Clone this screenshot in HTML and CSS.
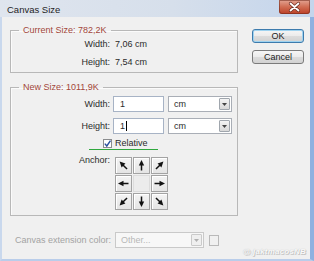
FILE: index.html
```html
<!DOCTYPE html>
<html>
<head>
<meta charset="utf-8">
<link rel="stylesheet" href="styles.css">
</head>
<body>
<div class="window">
  <div class="titlebar">
    <span class="title">Canvas Size</span>
    <div class="close">
      <svg width="31" height="14" viewBox="0 0 31 14"><path d="M11.5 3.5l8 7M19.5 3.5l-8 7" stroke="#6b2a1e" stroke-width="3.2" stroke-linecap="round"/><path d="M11.5 3.5l8 7M19.5 3.5l-8 7" stroke="#fff" stroke-width="1.8" stroke-linecap="round"/></svg>
    </div>
  </div>
  <div class="client">
    <div class="main">
      <div class="groups">
        <fieldset class="group g1">
          <legend>Current Size: 782,2K</legend>
          <div class="row"><span class="lbl">Width:</span><span class="val">7,06 cm</span></div>
          <div class="row"><span class="lbl">Height:</span><span class="val">7,54 cm</span></div>
        </fieldset>
        <fieldset class="group g2">
          <legend>New Size: 1011,9K</legend>
          <div class="row">
            <span class="lbl">Width:</span>
            <div class="input">1</div>
            <div class="select"><span class="sel-text">cm</span><span class="drop"><svg width="5" height="3" viewBox="0 0 5 3"><path d="M0 0h5L2.5 3z" fill="#444"/></svg></span></div>
          </div>
          <div class="row">
            <span class="lbl">Height:</span>
            <div class="input">1<span class="caret"></span></div>
            <div class="select"><span class="sel-text">cm</span><span class="drop"><svg width="5" height="3" viewBox="0 0 5 3"><path d="M0 0h5L2.5 3z" fill="#444"/></svg></span></div>
          </div>
          <div class="mark">
            <span class="check"><svg width="9" height="9" viewBox="0 0 9 9"><path d="M1.8 4.6l2 2.4L7.5 1.6" fill="none" stroke="#2a4f9e" stroke-width="1.4"/></svg></span>
            <span class="check-label">Relative</span>
          </div>
          <div class="anchor-row">
            <span class="lbl anchor-lbl">Anchor:</span>
            <div class="anchor">
              <div class="cell"><svg viewBox="0 0 15 15"><g transform="rotate(-45 7.5 7.5)"><path d="M7.5 12.5V6" stroke="#111" stroke-width="1.5"/><path d="M7.5 2L4.8 7.5h5.4z" fill="#111"/></g></svg></div>
              <div class="cell"><svg viewBox="0 0 15 15"><g><path d="M7.5 12.5V6" stroke="#111" stroke-width="1.5"/><path d="M7.5 2L4.8 7.5h5.4z" fill="#111"/></g></svg></div>
              <div class="cell"><svg viewBox="0 0 15 15"><g transform="rotate(45 7.5 7.5)"><path d="M7.5 12.5V6" stroke="#111" stroke-width="1.5"/><path d="M7.5 2L4.8 7.5h5.4z" fill="#111"/></g></svg></div>
              <div class="cell"><svg viewBox="0 0 15 15"><g transform="rotate(-90 7.5 7.5)"><path d="M7.5 12.5V6" stroke="#111" stroke-width="1.5"/><path d="M7.5 2L4.8 7.5h5.4z" fill="#111"/></g></svg></div>
              <div class="cell center"></div>
              <div class="cell"><svg viewBox="0 0 15 15"><g transform="rotate(90 7.5 7.5)"><path d="M7.5 12.5V6" stroke="#111" stroke-width="1.5"/><path d="M7.5 2L4.8 7.5h5.4z" fill="#111"/></g></svg></div>
              <div class="cell"><svg viewBox="0 0 15 15"><g transform="rotate(-135 7.5 7.5)"><path d="M7.5 12.5V6" stroke="#111" stroke-width="1.5"/><path d="M7.5 2L4.8 7.5h5.4z" fill="#111"/></g></svg></div>
              <div class="cell"><svg viewBox="0 0 15 15"><g transform="rotate(180 7.5 7.5)"><path d="M7.5 12.5V6" stroke="#111" stroke-width="1.5"/><path d="M7.5 2L4.8 7.5h5.4z" fill="#111"/></g></svg></div>
              <div class="cell"><svg viewBox="0 0 15 15"><g transform="rotate(135 7.5 7.5)"><path d="M7.5 12.5V6" stroke="#111" stroke-width="1.5"/><path d="M7.5 2L4.8 7.5h5.4z" fill="#111"/></g></svg></div>
            </div>
          </div>
        </fieldset>
      </div>
      <div class="buttons">
        <div class="btn ok">OK</div>
        <div class="btn">Cancel</div>
      </div>
    </div>
    <div class="ext">
      <span class="ext-lbl">Canvas extension color:</span>
      <div class="select disabled"><span class="sel-text">Other...</span><span class="drop"><svg width="5" height="3" viewBox="0 0 5 3"><path d="M0 0h5L2.5 3z" fill="#b0b0b0"/></svg></span></div>
      <span class="swatch"></span>
    </div>
    <div class="watermark">@ jaktmacosNB</div>
  </div>
</div>
</body>
</html>
```
FILE: styles.css
```css
html, body {
  margin: 0;
  padding: 0;
}
body {
  width: 314px;
  height: 261px;
  overflow: hidden;
  font-family: "Liberation Sans", Arial, sans-serif;
  font-size: 9px;
  color: #2b2b2b;
  background: #f0f0f0;
}
.window {
  display: flex;
  flex-direction: column;
  width: 314px;
  height: 261px;
}
.titlebar {
  height: 17px;
  flex: none;
  display: flex;
  align-items: flex-start;
  background: linear-gradient(to right, #dfe5ee 0%, #d6dfeb 55%, #c4d5ec 100%);
}
.title {
  padding-left: 7px;
  line-height: 20px;
  font-size: 9.5px;
  color: #1e1e1e;
}
.close {
  margin-left: auto;
  margin-right: 4px;
  width: 31px;
  height: 14px;
  border-radius: 0 0 3px 3px;
  background: linear-gradient(to bottom, #e3a493 0%, #d06c52 50%, #bb3f26 100%);
  box-shadow: inset 0 0 0 1px rgba(110, 40, 25, 0.55);
}
.close svg {
  display: block;
}
.client {
  flex: 1;
  display: flex;
  flex-direction: column;
  position: relative;
  border-left: 2px solid #c9d8ed;
  border-right: 4px solid #8fb1e0;
  border-bottom: 2px solid #b9cdea;
  padding: 7px 6px 0 8px;
  background: #f0f0f0;
}
.main {
  display: flex;
  gap: 14px;
}
.groups {
  display: flex;
  flex-direction: column;
  width: 228px;
}
.group {
  margin: 0;
  min-width: 0;
  width: 228px;
  box-sizing: border-box;
  border: 1px solid #b8b8b8;
  box-shadow: inset 1px 1px 0 #fbfbfb;
}
.group legend {
  margin-left: 8px;
  padding: 0 4px;
  line-height: 12px;
  color: #a2463a;
}
.g1 {
  padding: 1px 4px 3px 0;
}
.g2 {
  margin-top: 8px;
  padding: 3px 4px 5px 0;
}
.row {
  display: flex;
  align-items: center;
  height: 14px;
}
.g1 .row + .row {
  margin-top: 4px;
}
.g2 .row {
  height: 16px;
}
.g2 .row + .row {
  margin-top: 6px;
}
.lbl {
  width: 99px;
  flex: none;
  text-align: right;
}
.val {
  margin-left: 5px;
}
.input {
  width: 51px;
  height: 16px;
  box-sizing: border-box;
  margin-left: 3px;
  padding-left: 6px;
  line-height: 14px;
  border: 1px solid #a7b3c5;
  background: #fff;
  display: flex;
  align-items: center;
}
.caret {
  width: 1px;
  height: 10px;
  margin-left: 1px;
  background: #000;
}
.select {
  width: 64px;
  height: 16px;
  box-sizing: border-box;
  margin-left: 4px;
  display: flex;
  align-items: stretch;
  border: 1px solid #a9aeb6;
  background: #fff;
}
.sel-text {
  flex: 1;
  padding-left: 5px;
  line-height: 14px;
}
.drop {
  width: 11px;
  margin: 1px;
  display: flex;
  align-items: center;
  justify-content: center;
  border: 1px solid #a0a6ad;
  border-radius: 1px;
  background: linear-gradient(to bottom, #f4f4f4, #d8d8d8);
  box-sizing: border-box;
}
.drop svg {
  display: block;
}
.mark {
  margin-top: 3px;
  margin-left: 78px;
  width: 55px;
  height: 12px;
  padding-left: 14px;
  box-sizing: content-box;
  display: flex;
  align-items: center;
  gap: 3px;
  border-bottom: 1px solid #2fa83e;
}
.check {
  width: 9px;
  height: 9px;
  box-sizing: border-box;
  border: 1px solid #8a8c8e;
  background: #fff;
  display: flex;
  align-items: center;
  justify-content: center;
}
.check svg {
  display: block;
  flex: none;
}
.anchor-row {
  margin-top: 7px;
  display: flex;
  align-items: flex-start;
}
.anchor-lbl {
  line-height: 12px;
  margin-top: -3px;
}
.anchor {
  margin-left: 5px;
  display: grid;
  grid-template-columns: repeat(3, 17px);
  grid-template-rows: repeat(3, 17px);
  gap: 1px;
}
.cell {
  box-sizing: border-box;
  border: 1px solid #a3a3a3;
  background: linear-gradient(to bottom, #f4f4f4, #e4e4e4);
  box-shadow: inset 1px 1px 0 #fff;
}
.cell svg {
  display: block;
  width: 15px;
  height: 15px;
}
.cell.center {
  border-color: #dcdcdc;
  background: #ececec;
  box-shadow: none;
}
.buttons {
  display: flex;
  flex-direction: column;
  gap: 7px;
  padding-top: 5px;
  width: 52px;
}
.btn {
  height: 14px;
  box-sizing: border-box;
  border: 1px solid #7b7b7b;
  border-radius: 3px;
  background: linear-gradient(to bottom, #f6f6f6 0%, #ebebeb 50%, #dcdcdc 51%, #d2d2d2 100%);
  text-align: center;
  line-height: 12px;
  color: #1c1c1c;
}
.btn.ok {
  border-color: #3d7bad;
  box-shadow: inset 0 0 0 1px #9fd3f0;
}
.ext {
  margin-top: 16px;
  padding-left: 5px;
  display: flex;
  align-items: center;
  height: 16px;
}
.ext-lbl {
  width: 100px;
  color: #a3a3a3;
}
.select.disabled {
  width: 89px;
  margin-left: 0;
  border-color: #c9c9c9;
  background: #f7f7f7;
  color: #b8b8b8;
}
.select.disabled .drop {
  border-color: #cacaca;
  background: #efefef;
}
.swatch {
  width: 10px;
  height: 11px;
  margin-left: 5px;
  box-sizing: border-box;
  border: 1px solid #b9b9b9;
  background: #f0f0f0;
}
.watermark {
  position: absolute;
  right: 4px;
  bottom: 3px;
  font-size: 8px;
  font-style: italic;
  font-weight: bold;
  color: #fafafa;
  text-shadow: 0 0 1px #b0b0b0, 1px 1px 0 #c8c8c8;
  letter-spacing: 0.2px;
}
```
